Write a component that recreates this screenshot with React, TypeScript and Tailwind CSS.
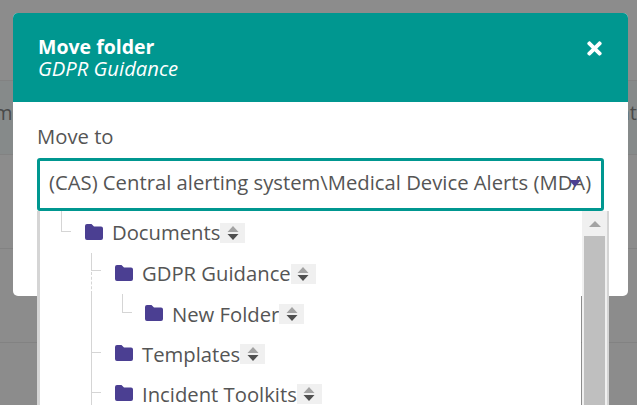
import { FaTimes } from 'react-icons/fa'

const rows = [
  { name: 'Documents', depth: 0, y: 'h-[41px]' },
  { name: 'GDPR Guidance', depth: 1, y: 'h-[41px]' },
  { name: 'New Folder', depth: 2, y: 'h-[40px]' },
  { name: 'Templates', depth: 1, y: 'h-[40px]' },
  { name: 'Incident Toolkits', depth: 1, y: 'h-[40px]' },
]

function FolderIcon() {
  return (
    <svg className="mb-[2px] shrink-0" width="18" height="16" viewBox="0 0 18 16">
      <path
        d="M2 0 H6.5 L9 2.5 H16 a2 2 0 0 1 2 2 V14 a2 2 0 0 1 -2 2 H2 a2 2 0 0 1 -2 -2 V2 a2 2 0 0 1 2 -2 Z"
        fill="#4b3f92"
      />
    </svg>
  )
}

function SortIcon() {
  return (
    <span className="flex h-[20px] w-[25px] items-center justify-center bg-[#f0f0f0]">
      <svg width="14" height="16" viewBox="0 0 14 16">
        <path d="M7 1 L12.5 7 H1.5 Z" fill="#a3a3a3" />
        <path d="M7 15 L12.5 9 H1.5 Z" fill="#4f4f4f" />
      </svg>
    </span>
  )
}

function TreeRow({ name, depth, y }: { name: string; depth: number; y: string }) {
  const pad = depth === 0 ? 'pl-[45px]' : depth === 1 ? 'pl-[75px]' : 'pl-[105px]'
  return (
    <div className={`flex items-center ${y} ${pad}`}>
      <FolderIcon />
      <span className="ml-[9px] text-[20.25px] leading-none text-[#555]">{name}</span>
      <SortIcon />
    </div>
  )
}

export default function App() {
  return (
    <div className="relative h-[405px] w-[637px] overflow-hidden bg-[#8c8c8c] font-['Open_Sans',sans-serif]">
      {/* page behind the overlay */}
      <div className="h-[81px] border-b border-[#828282]" />
      <div className="flex h-[74px] items-center justify-between border-b border-[#828282] bg-[#868a8a] pb-[10px] text-[20px] text-[#4a4a4a]">
        <span className="-ml-[6px]">m</span>
        <span>nt</span>
      </div>
      <div className="h-[94px] border-b border-[#828282]" />
      <div className="h-[94px] border-b border-[#828282]" />

      <div className="absolute left-[13px] top-[13px] h-[283px] w-[615px] rounded-[5px] bg-white">
        <div className="flex h-[89px] items-start justify-between rounded-t-[5px] bg-[#009790] pl-[25px] pr-[23px] pt-[23px] text-white">
          <div>
            <div className="text-[19.5px] font-bold leading-[22px]">Move folder</div>
            <div className="text-[20.25px] italic leading-[20px]">GDPR Guidance</div>
          </div>
          <FaTimes className="mt-[2px] text-[21px]" />
        </div>
        <div className="px-[24px] pt-[22px]">
          <div className="text-[20.25px] leading-[24px] text-[#555]">Move to</div>
          <div className="relative mt-[10px]">
            <div className="relative h-[53px] whitespace-nowrap rounded-[3px] border-[3px] border-[#009790] bg-white pl-[9px] pt-[7px] text-[20.25px] leading-[28px] text-[#555]">
              (CAS) Central alerting system\Medical Device Alerts (MDA)
              <span className="absolute right-[20px] top-[19px] h-0 w-0 border-x-[6px] border-t-[7px] border-x-transparent border-t-[#4b3f92]" />
            </div>
            <div className="absolute left-0 top-[53px] flex h-[194px] w-[572px] border-l-[3px] border-[#d5d5d5]">
              <div className="relative w-[541px] bg-white">
                <span className="absolute left-[21px] top-0 h-[21px] w-[10px] border-b border-l border-[#d5d5d5]" />
                <span className="absolute left-[51px] top-[42px] h-[18px] w-[10px] border-b border-l border-[#d5d5d5]" />
                <span className="absolute left-[51px] top-[61px] h-[22px] border-l border-dashed border-[#d5d5d5]" />
                <span className="absolute left-[51px] top-[83px] h-[59px] w-[10px] border-b border-l border-[#d5d5d5]" />
                <span className="absolute left-[51px] top-[142px] h-[40px] w-[10px] border-b border-l border-[#d5d5d5]" />
                <span className="absolute left-[51px] top-[182px] h-[12px] border-l border-[#d5d5d5]" />
                <span className="absolute left-[82px] top-[83px] h-[19px] w-[10px] border-b border-l border-[#d5d5d5]" />
                <div className="pt-px">
                  {rows.map((row) => (
                    <TreeRow key={row.name} {...row} />
                  ))}
                </div>
              </div>
              <div className="ml-px flex w-[27px] flex-col border-r-2 border-[#d5d5d5] bg-[#f0f0f0]">
                <div className="flex h-[25px] items-center justify-center">
                  <span className="h-0 w-0 border-x-[6px] border-b-[6px] border-x-transparent border-b-[#a3a3a3]" />
                </div>
                <div className="mx-[2px] flex-1 bg-[#bfbfbf]" />
              </div>
            </div>
          </div>
        </div>
      </div>
    </div>
  )
}
